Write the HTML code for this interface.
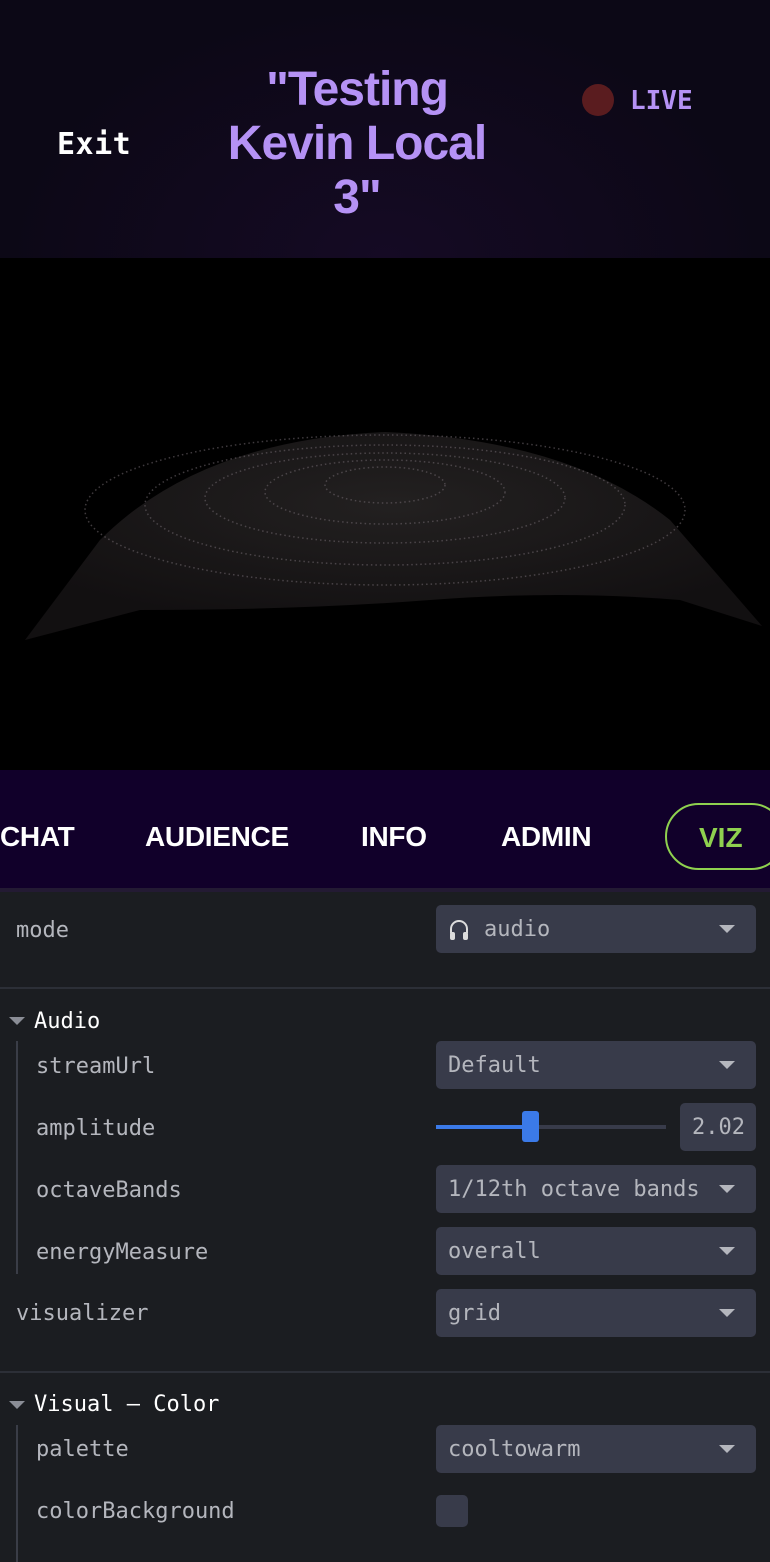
<!DOCTYPE html>
<html><head><meta charset="utf-8"><style>
*{margin:0;padding:0;box-sizing:border-box}
body{width:770px;height:1562px;background:#1b1d21;overflow:hidden;font-family:"Liberation Sans",sans-serif}
.hdr{position:absolute;left:0;top:0;width:770px;height:258px;background:radial-gradient(ellipse at 50% 100%,#150a24,#0c0816 70%)}
.exit{position:absolute;left:57px;top:127px;color:#fff;font:bold 30px "DejaVu Sans Mono","Liberation Mono",monospace;letter-spacing:0.5px}
.title{position:absolute;left:212px;width:290px;top:63px;text-align:center;color:#b592f5;font:bold 48px/54px "Liberation Sans",sans-serif;letter-spacing:-1px}
.dot{position:absolute;left:582px;top:84px;width:32px;height:32px;border-radius:50%;background:#5a1c1f}
.live{position:absolute;left:630px;top:86px;color:#b592f5;font:bold 26px "DejaVu Sans Mono",monospace}
.viz{position:absolute;left:0;top:258px;width:770px;height:512px;background:#000}
.nav{position:absolute;left:0;top:770px;width:770px;height:122px;background:#11002a;border-bottom:4px solid #231a33}
.nav span{position:absolute;top:51px;color:#fff;font:bold 28px "Liberation Sans",sans-serif;letter-spacing:-0.3px}
.vizb{position:absolute;left:665px;top:803px;width:120px;height:67px;border:2px solid #8fd14f;border-radius:34px;color:#8fd14f;font:bold 28px "Liberation Sans",sans-serif;padding:17px 0 0 32px}
.lbl{position:absolute;color:#b4b6bd;font:22px "DejaVu Sans Mono","Liberation Mono",monospace;margin-top:2px}
.sel{position:absolute;left:436px;width:320px;height:48px;background:#383b4a;border-radius:5px;color:#b4b6bd;font:22px "DejaVu Sans Mono",monospace;padding:12px 12px 0}
.sel:after{content:"";position:absolute;right:21px;top:20px;border-left:8px solid transparent;border-right:8px solid transparent;border-top:8px solid #b4b6bd}
.sel.num:after{display:none}
.hd{position:absolute;color:#fff;font:22px "DejaVu Sans Mono",monospace;margin-top:2px}
.tri{position:absolute;left:9px;border-left:8px solid transparent;border-right:8px solid transparent;border-top:8px solid #8a8d96}
.vl{position:absolute;left:16px;width:2px;background:#3a3d47}
.sep{position:absolute;left:0;width:770px;height:2px;background:#2c2f37}
</style></head><body>
<div class="hdr"></div>
<div class="exit">Exit</div>
<div class="title">"Testing Kevin Local 3"</div>
<div class="dot"></div><div class="live">LIVE</div>
<div class="viz"><svg width="770" height="512" viewBox="0 258 770 512">
<defs><radialGradient id="g" cx="50%" cy="35%" r="60%"><stop offset="0" stop-color="#3a3636"/><stop offset="1" stop-color="#1e1a1c"/></radialGradient></defs>
<path d="M25 640 L100 540 Q200 440 385 432 Q570 440 670 520 L762 626 L680 600 Q560 590 430 600 Q300 610 140 610 Z" fill="url(#g)" opacity="0.6"/>
<g fill="none" stroke="#6a6268" stroke-width="1.5" stroke-dasharray="1.5 3" opacity="0.6">
<ellipse cx="385" cy="510" rx="300" ry="75"/><ellipse cx="385" cy="505" rx="240" ry="60"/><ellipse cx="385" cy="498" rx="180" ry="45"/><ellipse cx="385" cy="492" rx="120" ry="32"/><ellipse cx="385" cy="485" rx="60" ry="18"/>
</g></svg></div>
<div class="nav"><span style="left:0">CHAT</span><span style="left:145px">AUDIENCE</span><span style="left:361px">INFO</span><span style="left:501px">ADMIN</span></div>
<div class="vizb">VIZ</div>
<div class="lbl" style="left:16px;top:916px">mode</div>
<div class="sel" style="top:905px;padding-left:48px"><svg style="position:absolute;left:13px;top:14px" width="20" height="22" viewBox="0 0 20 22"><path d="M2 14V10a8 8 0 0116 0v4" fill="none" stroke="#ddd" stroke-width="2"/><rect x="1" y="13" width="5" height="8" rx="2" fill="#ddd"/><rect x="14" y="13" width="5" height="8" rx="2" fill="#ddd"/></svg>audio</div>
<div class="sep" style="top:987px"></div>
<div class="tri" style="top:1017px"></div><div class="hd" style="left:34px;top:1007px">Audio</div>
<div class="vl" style="top:1041px;height:233px"></div>
<div class="lbl" style="left:36px;top:1052px">streamUrl</div><div class="sel" style="top:1041px">Default</div>
<div class="lbl" style="left:36px;top:1114px">amplitude</div>
<div style="position:absolute;left:436px;top:1125px;width:230px;height:4px;background:#383b4a"></div>
<div style="position:absolute;left:436px;top:1125px;width:94px;height:4px;background:#3b7ae8"></div>
<div style="position:absolute;left:522px;top:1111px;width:17px;height:31px;background:#3b7ae8;border-radius:3px"></div>
<div class="sel num" style="left:680px;width:76px;top:1103px">2.02</div>
<div class="lbl" style="left:36px;top:1176px">octaveBands</div><div class="sel" style="top:1165px">1/12th octave bands</div>
<div class="lbl" style="left:36px;top:1238px">energyMeasure</div><div class="sel" style="top:1227px">overall</div>
<div class="lbl" style="left:16px;top:1299px">visualizer</div><div class="sel" style="top:1289px">grid</div>
<div class="sep" style="top:1371px"></div>
<div class="tri" style="top:1401px"></div><div class="hd" style="left:34px;top:1390px">Visual – Color</div>
<div class="vl" style="top:1425px;height:137px"></div>
<div class="lbl" style="left:36px;top:1435px">palette</div><div class="sel" style="top:1425px">cooltowarm</div>
<div class="lbl" style="left:36px;top:1497px">colorBackground</div>
<div style="position:absolute;left:436px;top:1495px;width:32px;height:32px;background:#383b4a;border-radius:5px"></div>
</body></html>
